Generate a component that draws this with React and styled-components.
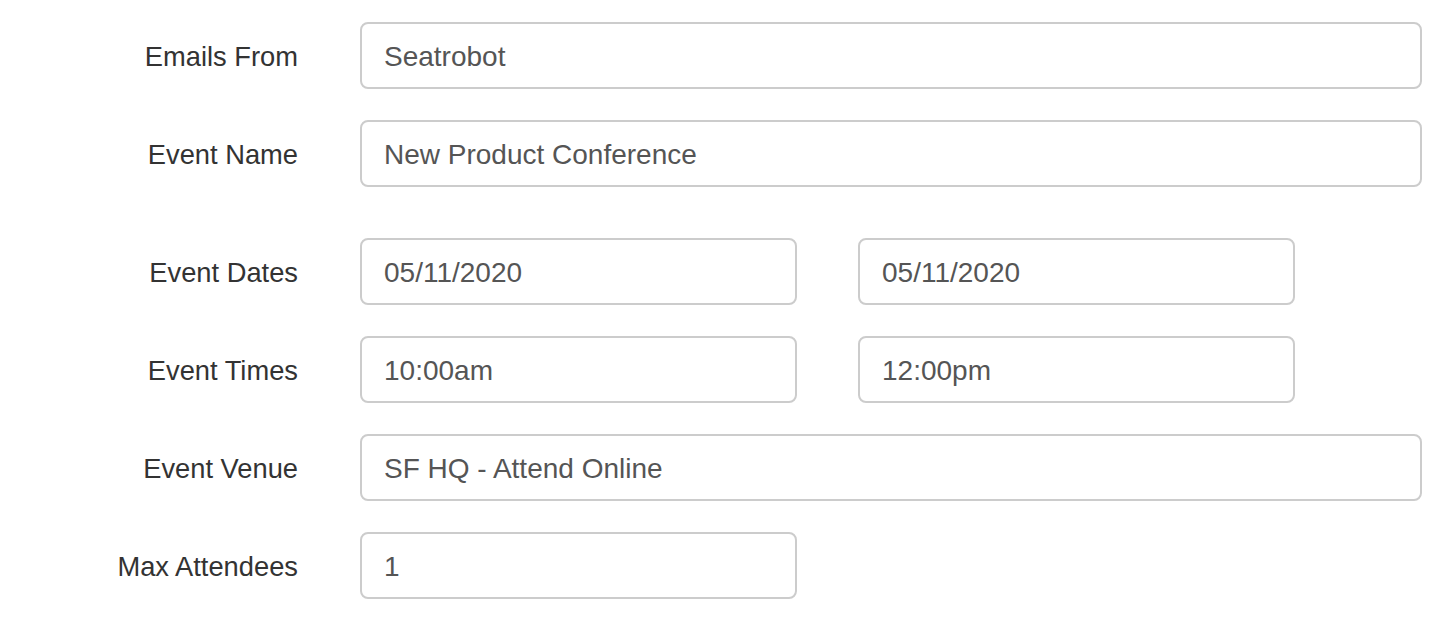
import React from "react"
import styled, { createGlobalStyle } from "styled-components"

const GlobalStyle = createGlobalStyle`
    body {
        margin: 0;
        background: #fff;
        font-family: "Liberation Sans", Arial, sans-serif;
    }
`

const Form = styled.form`
    display: flex;
    flex-direction: column;
    gap: 31px;
    padding: 22px 22px 0 0;
`

const Group = styled.div`
    display: grid;
    grid-template-columns: 298px 1fr;
    column-gap: 62px;
    align-items: center;
    margin-top: ${props => (props.spaced ? "20px" : "0")};
`

const Label = styled.label`
    text-align: right;
    font-size: 27.3px;
    color: #333;
    padding-top: 2px;
`

const Fields = styled.div`
    display: grid;
    grid-template-columns: ${props => (props.half ? "437px 437px" : "1fr")};
    column-gap: 61px;
`

const Input = styled.input`
    box-sizing: border-box;
    width: 100%;
    height: 67px;
    padding: 2px 22px 0;
    border: 2px solid #ccc;
    border-radius: 8px;
    font-family: "Liberation Sans", Arial, sans-serif;
    font-size: 28px;
    color: #555;
    background: #fff;
    outline: none;
`

const rows = [
    { label: "Emails From", values: ["Seatrobot"] },
    { label: "Event Name", values: ["New Product Conference"] },
    { label: "Event Dates", values: ["05/11/2020", "05/11/2020"], half: true, spaced: true },
    { label: "Event Times", values: ["10:00am", "12:00pm"], half: true },
    { label: "Event Venue", values: ["SF HQ - Attend Online"] },
    { label: "Max Attendees", values: ["1"], half: true },
]

export default function App() {
    return (
        <>
            <GlobalStyle />
            <Form onSubmit={e => e.preventDefault()}>
                {rows.map(row => (
                    <Group key={row.label} spaced={row.spaced}>
                        <Label>{row.label}</Label>
                        <Fields half={row.half}>
                            {row.values.map((v, i) => (
                                <Input key={i} type="text" defaultValue={v} />
                            ))}
                        </Fields>
                    </Group>
                ))}
            </Form>
        </>
    )
}
